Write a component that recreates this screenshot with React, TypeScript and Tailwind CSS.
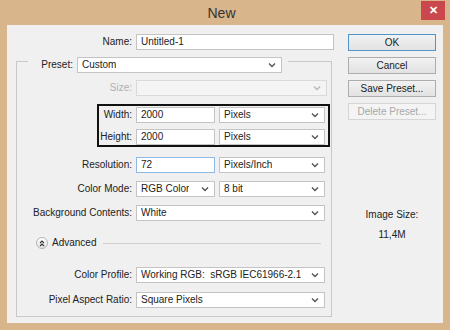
import React from 'react';

const Chevron: React.FC<{ muted?: boolean }> = ({ muted }) => (
    <svg width="8" height="6" viewBox="0 0 8 6" className="shrink-0">
        <path d="M1 1.5 L4 4.5 L7 1.5" fill="none" stroke={muted ? '#b8b8b8' : '#555'} strokeWidth="1.4" />
    </svg>
);

type BoxProps = { value?: string; w: string; disabled?: boolean; focused?: boolean };

const Select: React.FC<BoxProps> = ({ value, w, disabled }) => (
    <div
        className={`${w} h-[16px] flex items-center justify-between pl-[4px] pr-[5px] border ${
            disabled ? 'border-[#d9d9d9] bg-[#f4f4f4]' : 'border-[#c4c4c4] bg-white'
        }`}
    >
        <span className="truncate whitespace-pre">{value}</span>
        <Chevron muted={disabled} />
    </div>
);

const Input: React.FC<BoxProps> = ({ value, w, focused }) => (
    <div
        className={`${w} h-[16px] flex items-center pl-[4px] border bg-white ${
            focused ? 'border-[#8cb9e6]' : 'border-[#c4c4c4]'
        }`}
    >
        {value}
    </div>
);

const Row: React.FC<{ label: string; labelW?: string; muted?: boolean; children: React.ReactNode; className?: string }> = ({
    label,
    labelW = 'w-[115px]',
    muted,
    children,
    className = '',
}) => (
    <div className={`flex items-center gap-[4px] ${className}`}>
        <div className={`${labelW} shrink-0 text-right ${muted ? 'text-[#b0b0b0]' : ''}`}>{label}</div>
        {children}
    </div>
);

const Button: React.FC<{ label: string; primary?: boolean; disabled?: boolean }> = ({ label, primary, disabled }) => (
    <div
        className={`w-[88px] h-[17px] flex items-center justify-center border bg-gradient-to-b from-[#f2f2f2] to-[#e2e2e2] ${
            primary ? 'border-[#4f94cd]' : disabled ? 'border-[#d6d6d6]' : 'border-[#adadad]'
        } ${disabled ? 'text-[#a8a8a8] from-[#f4f4f4] to-[#f4f4f4]' : ''}`}
    >
        {label}
    </div>
);

export default function App() {
    return (
        <div
            className="w-[450px] h-[330px] bg-[#d9b58c] flex flex-col text-[10px] text-[#222] leading-none overflow-hidden"
            style={{ fontFamily: '"Liberation Sans", Arial, sans-serif' }}
        >
            {/* title bar */}
            <div className="h-[25px] shrink-0 flex items-start">
                <div className="flex-1 h-full flex items-center justify-center text-[14px] text-[#333] pl-[22px]">New</div>
                <div className="w-[24px] h-[19px] mr-[5px] mt-[1px] bg-[#c9474d] flex items-center justify-center text-white text-[11px] font-bold">
                    ✕
                </div>
            </div>

            {/* dialog body */}
            <div className="mx-[7px] h-[298px] bg-[#f0f0f0] flex">
                <div className="w-[330px] shrink-0 pt-[9px]">
                    <Row label="Name:" labelW="w-[125px]">
                        <Input w="w-[198px]" value="Untitled-1" />
                    </Row>

                    <div className="ml-[9px] mt-[11px] w-[316px] border border-[#c8c8c8] pb-[8px]">
                        <div className="ml-[11px] mt-[-5px] w-[260px] bg-[#f0f0f0] flex items-center gap-[4px]">
                            <div className="w-[45px] text-right">Preset:</div>
                            <Select w="w-[205px]" value="Custom" />
                        </div>

                        <Row label="Size:" muted className="mt-[7px]">
                            <Select w="w-[191px]" disabled />
                        </Row>

                        <div className="ml-[80px] mt-[8px] w-[233px] border-2 border-[#111] pt-[1px] pr-[3px] flex flex-col gap-[6px]">
                            <Row label="Width:" labelW="w-[33px]">
                                <Input w="w-[79px]" value="2000" />
                                <Select w="w-[106px]" value="Pixels" />
                            </Row>
                            <Row label="Height:" labelW="w-[33px]">
                                <Input w="w-[79px]" value="2000" />
                                <Select w="w-[106px]" value="Pixels" />
                            </Row>
                        </div>

                        <Row label="Resolution:" className="mt-[10px]">
                            <Input w="w-[79px]" value="72" focused />
                            <Select w="w-[106px]" value="Pixels/Inch" />
                        </Row>
                        <Row label="Color Mode:" className="mt-[8px]">
                            <Select w="w-[79px]" value="RGB Color" />
                            <Select w="w-[106px]" value="8 bit" />
                        </Row>
                        <Row label="Background Contents:" className="mt-[8px]">
                            <Select w="w-[189px]" value="White" />
                        </Row>

                        <div className="mt-[16px] ml-[19px] flex items-center">
                            <div className="w-[12px] h-[12px] rounded-full border border-[#b5b5b5] bg-gradient-to-b from-white to-[#e4e4e4] flex items-center justify-center">
                                <svg width="6" height="7" viewBox="0 0 6 7">
                                    <path d="M1 3 L3 1 L5 3 M1 6 L3 4 L5 6" fill="none" stroke="#333" strokeWidth="1.1" />
                                </svg>
                            </div>
                            <span className="ml-[4px]">Advanced</span>
                            <div className="ml-[7px] w-[218px] h-[1px] bg-[#d0d0d0]" />
                        </div>

                        <Row label="Color Profile:" className="mt-[18px]">
                            <Select w="w-[189px]" value="Working RGB:  sRGB IEC61966-2.1" />
                        </Row>
                        <Row label="Pixel Aspect Ratio:" className="mt-[9px]">
                            <Select w="w-[189px]" value="Square Pixels" />
                        </Row>
                    </div>
                </div>

                <div className="flex-1 pt-[9px] pl-[11px] flex flex-col">
                    <div className="flex flex-col gap-[6px]">
                        <Button label="OK" primary />
                        <Button label="Cancel" />
                        <Button label="Save Preset..." />
                        <Button label="Delete Preset..." disabled />
                    </div>
                    <div className="w-[88px] mt-[90px] flex flex-col items-center gap-[10px]">
                        <span>Image Size:</span>
                        <span>11,4M</span>
                    </div>
                </div>
            </div>
        </div>
    );
}
